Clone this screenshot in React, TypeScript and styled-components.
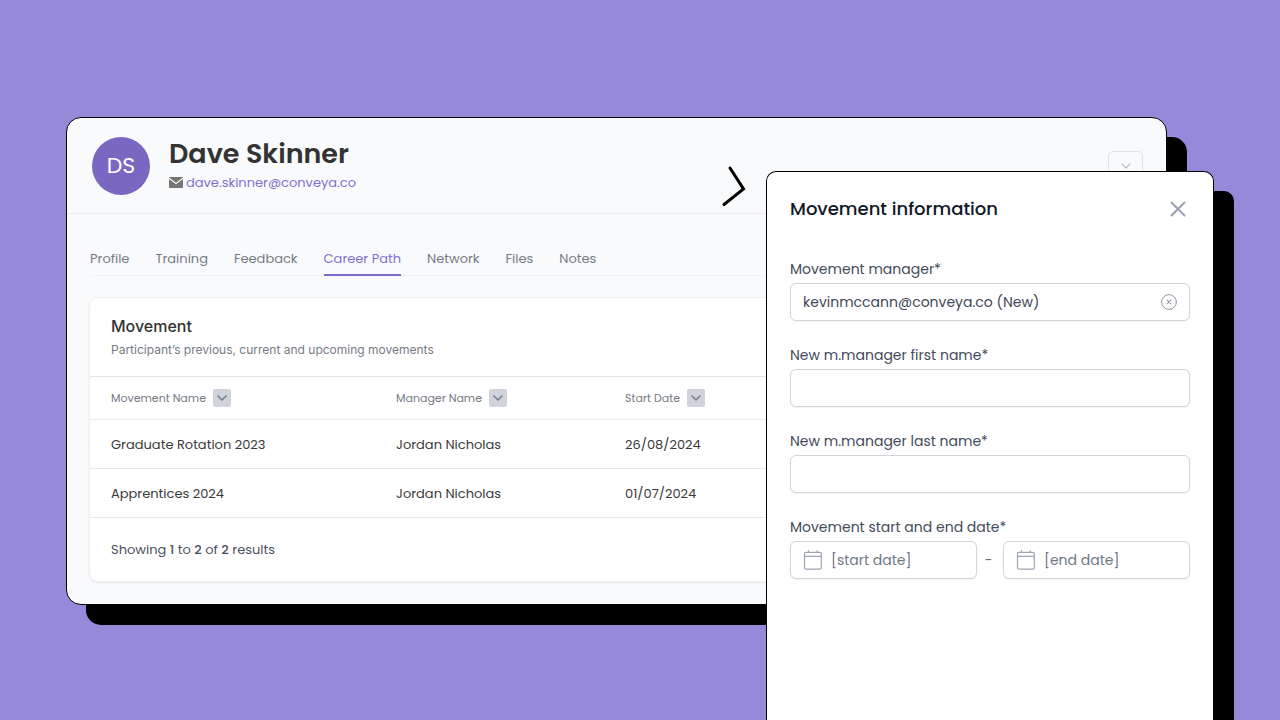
import React from "react";
import styled, { createGlobalStyle } from "styled-components";

const poppins = `Poppins, Inter, "Liberation Sans", sans-serif`;
const inter = `Inter, "Liberation Sans", sans-serif`;

const GlobalStyle = createGlobalStyle`
  *, *::before, *::after { box-sizing: border-box; }
  body {
    margin: 0;
    background: #9789da;
    font-family: ${poppins};
    color: #333333;
  }
  h1, h2, p { margin: 0; }
  button, input { font: inherit; }
`;

const Stage = styled.div`
  position: relative;
  min-height: 100vh;
  overflow: hidden;
  padding: 117px 113px 115px 66px;
`;

const Window = styled.main`
  border: 1px solid #000;
  border-radius: 15px;
  background: #f9fafc;
  box-shadow: 20px 20px 0 #000;
`;

const Header = styled.header`
  display: flex;
  align-items: center;
  height: 96px;
  padding: 0 23px 0 25px;
  border-bottom: 1px solid #ececee;
`;

const Avatar = styled.div`
  display: flex;
  flex: none;
  align-items: center;
  justify-content: center;
  width: 58px;
  height: 58px;
  border-radius: 50%;
  background: #7a67c1;
  color: #fff;
  font-size: 22px;
`;

const Identity = styled.div`
  flex: 1;
  padding: 0 0 2px 19px;
`;

const Name = styled.h1`
  font-size: 27px;
  font-weight: 600;
  line-height: 36px;
`;

const MailLink = styled.a`
  display: flex;
  align-items: center;
  gap: 3px;
  color: #8370ce;
  font-size: 13px;
  line-height: 22px;
  text-decoration: none;
`;

const MenuButton = styled.button`
  display: flex;
  align-items: center;
  justify-content: center;
  width: 35px;
  height: 29px;
  padding: 0;
  border: 1px solid #e1e2e6;
  border-radius: 5px;
  background: transparent;
`;

const Content = styled.div`
  padding: 35px 23px 23px;
`;

const Tabs = styled.nav`
  display: flex;
  gap: 26px;
  box-shadow: inset 0 -1px 0 #f0f1f4;
`;

const Tab = styled.a<{ $active?: boolean }>`
  padding-bottom: 5px;
  border-bottom: 2px solid ${(p) => (p.$active ? "#7c69c6" : "transparent")};
  color: ${(p) => (p.$active ? "#8470cf" : "#757b84")};
  font-size: 13px;
  line-height: 20px;
  text-decoration: none;
`;

const Card = styled.section`
  margin-top: 22px;
  border-radius: 8px;
  background: #fff;
  box-shadow: 0 0 0 1px #eff0f3, 0 1px 2px 1px rgba(0, 0, 0, 0.08);
`;

const CardHead = styled.div`
  padding: 16px 21px;
  border-bottom: 1px solid #e2e3e6;
  font-family: ${inter};
`;

const CardTitle = styled.h2`
  font-size: 16px;
  font-weight: 500;
  line-height: 24px;
`;

const CardText = styled.p`
  margin-top: 2px;
  color: #757b84;
  font-size: 12px;
  line-height: 20px;
`;

const Table = styled.table`
  width: 100%;
  border-collapse: separate;
  border-spacing: 0;
  table-layout: fixed;
`;

const Th = styled.th<{ $width?: string }>`
  width: ${(p) => p.$width ?? "auto"};
  height: 43px;
  padding: 0 0 0 21px;
  border-bottom: 1px solid #e9eaed;
  color: #757b84;
  font-size: 11px;
  font-weight: 400;
  text-align: left;
`;

const ThInner = styled.span`
  display: flex;
  align-items: center;
  gap: 7px;
`;

const SortButton = styled.button`
  display: flex;
  align-items: center;
  justify-content: center;
  width: 18px;
  height: 18px;
  padding: 0;
  border: 0;
  border-radius: 2px;
  background: #d0d3dc;
`;

const Td = styled.td`
  height: 49px;
  padding: 1px 0 0 21px;
  border-bottom: 1px solid #e7e8eb;
  color: #3a3a3a;
  font-size: 13px;
`;

const Results = styled.p`
  padding: 21px;
  color: #4b515e;
  font-size: 13px;
  line-height: 21px;

  strong { font-weight: 500; }
`;

const Drawer = styled.aside`
  position: absolute;
  top: 171px;
  right: 66px;
  bottom: 0;
  width: 35%;
  padding: 22px 23px;
  border: 1px solid #000;
  border-bottom: 0;
  border-radius: 10px 10px 0 0;
  background: #fff;
  box-shadow: 20px 20px 0 #000;
`;

const Pointer = styled.svg`
  position: absolute;
  top: -8px;
  left: -46px;
`;

const DrawerHead = styled.div`
  display: flex;
  align-items: center;
  justify-content: space-between;
  height: 30px;
  margin-bottom: 35px;
`;

const DrawerTitle = styled.h2`
  color: #111827;
  font-size: 18px;
  font-weight: 500;
  line-height: 28px;
`;

const IconButton = styled.button`
  display: flex;
  align-items: center;
  justify-content: center;
  width: 24px;
  height: 24px;
  padding: 0;
  border: 0;
  background: transparent;
`;

const Form = styled.form`
  display: flex;
  flex-direction: column;
  gap: 24px;
`;

const Field = styled.div`
  display: flex;
  flex-direction: column;
  gap: 4px;
`;

const Label = styled.label`
  color: #434b5a;
  font-size: 14px;
  line-height: 20px;
`;

const Control = styled.div`
  display: flex;
  flex: 1 1 38px;
  align-items: center;
  gap: 8px;
  min-width: 0;
  height: 38px;
  padding: 0 8px 0 12px;
  border: 1px solid #d2d4dc;
  border-radius: 6px;
  background: #fff;
  box-shadow: 0 1px 2px rgba(0, 0, 0, 0.05);
`;

const Input = styled.input`
  flex: 1;
  width: 100%;
  min-width: 0;
  height: 34px;
  padding: 0;
  border: 0;
  outline: 0;
  background: transparent;
  color: #3f4857;
  font-size: 14px;

  &::placeholder { color: #717887; opacity: 1; }
`;

const DateRow = styled.div`
  display: flex;
  align-items: center;
`;

const Dash = styled.span`
  width: 26px;
  padding-right: 3px;
  color: #6b7280;
  font-size: 14px;
  text-align: center;
`;

const MailIcon = () => (
  <svg width="14" height="11" viewBox="0 0 14 11" aria-hidden="true">
    <rect width="14" height="11" rx="1" fill="#757575" />
    <path d="M0 1.2 7 6.6l7-5.4" fill="none" stroke="#f9fafc" strokeWidth="1.2" />
  </svg>
);

const Chevron = ({ color, width }: { color: string; width: number }) => (
  <svg width="10" height="8" viewBox="0 0 10 8" fill="none" aria-hidden="true">
    <path d="M1 2l4 4 4-4" stroke={color} strokeWidth={width} strokeLinecap="round" strokeLinejoin="round" />
  </svg>
);

const CloseIcon = () => (
  <svg width="16" height="16" viewBox="0 0 16 16" fill="none" aria-hidden="true">
    <path d="M1.5 1.5l13 13M14.5 1.5l-13 13" stroke="#9aa2b1" strokeWidth="2" strokeLinecap="round" />
  </svg>
);

const ClearIcon = () => (
  <svg width="16" height="16" viewBox="0 0 16 16" fill="none" stroke="#8f97a5" strokeLinecap="round" aria-hidden="true">
    <circle cx="8" cy="8" r="7.4" strokeWidth="1" />
    <path d="M6.2 6.2l3.6 3.6M9.8 6.2 6.2 9.8" strokeWidth="1.1" />
  </svg>
);

const CalendarIcon = () => (
  <svg width="20" height="20" viewBox="0 0 20 20" fill="none" stroke="#9ea5b3" strokeWidth="1.2" strokeLinecap="round" aria-hidden="true">
    <rect x="1.5" y="2.3" width="16.8" height="16.8" rx="1.6" />
    <path d="M1.5 6.4h16.8M5.5.7v1.6M14.2.7v1.6" />
  </svg>
);

const tabs = ["Profile", "Training", "Feedback", "Career Path", "Network", "Files", "Notes"];
const columns = [
  { title: "Movement Name", width: "285px" },
  { title: "Manager Name", width: "229px" },
  { title: "Start Date" },
];
const rows = [
  ["Graduate Rotation 2023", "Jordan Nicholas", "26/08/2024"],
  ["Apprentices 2024", "Jordan Nicholas", "01/07/2024"],
];

export default function App() {
  return (
    <>
      <GlobalStyle />
      <Stage>
        <Window>
          <Header>
            <Avatar>DS</Avatar>
            <Identity>
              <Name>Dave Skinner</Name>
              <MailLink href="mailto:dave.skinner@conveya.co">
                <MailIcon />
                dave.skinner@conveya.co
              </MailLink>
            </Identity>
            <MenuButton type="button" aria-label="More actions">
              <Chevron color="#b9bdc7" width={1.2} />
            </MenuButton>
          </Header>
          <Content>
            <Tabs>
              {tabs.map((tab) => (
                <Tab key={tab} href="#" $active={tab === "Career Path"}>
                  {tab}
                </Tab>
              ))}
            </Tabs>
            <Card>
              <CardHead>
                <CardTitle>Movement</CardTitle>
                <CardText>Participant’s previous, current and upcoming movements</CardText>
              </CardHead>
              <Table>
                <thead>
                  <tr>
                    {columns.map((column) => (
                      <Th key={column.title} $width={column.width}>
                        <ThInner>
                          {column.title}
                          <SortButton type="button" aria-label={`Sort by ${column.title}`}>
                            <Chevron color="#777e8e" width={1.6} />
                          </SortButton>
                        </ThInner>
                      </Th>
                    ))}
                  </tr>
                </thead>
                <tbody>
                  {rows.map((row) => (
                    <tr key={row[0]}>
                      {row.map((cell) => (
                        <Td key={cell}>{cell}</Td>
                      ))}
                    </tr>
                  ))}
                </tbody>
              </Table>
              <Results>
                Showing <strong>1</strong> to <strong>2</strong> of <strong>2</strong> results
              </Results>
            </Card>
          </Content>
        </Window>

        <Drawer>
          <Pointer width="26" height="44" viewBox="0 0 26 44" fill="none" aria-hidden="true">
            <path d="M9 4l13.5 21L3 40.5" stroke="#000" strokeWidth="3" strokeLinecap="round" />
          </Pointer>
          <DrawerHead>
            <DrawerTitle>Movement information</DrawerTitle>
            <IconButton type="button" aria-label="Close">
              <CloseIcon />
            </IconButton>
          </DrawerHead>
          <Form>
            <Field>
              <Label htmlFor="manager">Movement manager*</Label>
              <Control>
                <Input id="manager" defaultValue="kevinmccann@conveya.co (New)" />
                <IconButton type="button" aria-label="Clear manager">
                  <ClearIcon />
                </IconButton>
              </Control>
            </Field>
            <Field>
              <Label htmlFor="first-name">New m.manager first name*</Label>
              <Control>
                <Input id="first-name" />
              </Control>
            </Field>
            <Field>
              <Label htmlFor="last-name">New m.manager last name*</Label>
              <Control>
                <Input id="last-name" />
              </Control>
            </Field>
            <Field>
              <Label htmlFor="start-date">Movement start and end date*</Label>
              <DateRow>
                <Control>
                  <CalendarIcon />
                  <Input id="start-date" placeholder="[start date]" />
                </Control>
                <Dash>-</Dash>
                <Control>
                  <CalendarIcon />
                  <Input aria-label="Movement end date" placeholder="[end date]" />
                </Control>
              </DateRow>
            </Field>
          </Form>
        </Drawer>
      </Stage>
    </>
  );
}
